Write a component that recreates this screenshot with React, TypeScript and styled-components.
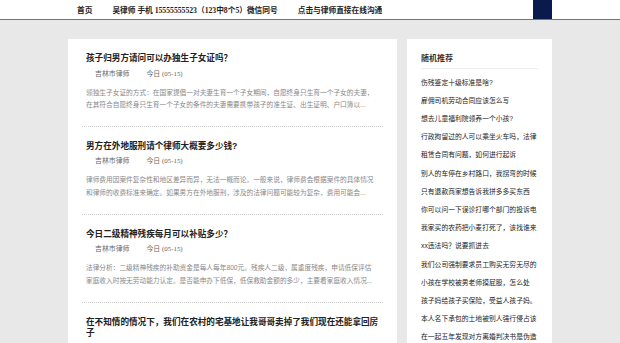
import React from "react";
import styled, { createGlobalStyle } from "styled-components";

const articles = [
  {
    id: 1,
    title: "孩子归男方请问可以办独生子女证吗？",
    date: "今日 (05-15)",
    summary:
      "领独生子女证的方式：在国家提倡一对夫妻生育一个子女期间，自愿终身只生育一个子女的夫妻，在其符合自愿终身只生育一个子女的条件的夫妻需要携带孩子的准生证、出生证明、户口簿以..."
  },
  {
    id: 2,
    title: "男方在外地服刑请个律师大概要多少钱?",
    date: "今日 (05-15)",
    summary:
      "律师费用因案件复杂性和地区差异而异，无法一概而论。一般来说，律师费会根据案件的具体情况和律师的收费标准来确定。如果男方在外地服刑，涉及的法律问题可能较为复杂，费用可能会..."
  },
  {
    id: 3,
    title: "今日二级精神残疾每月可以补贴多少？",
    date: "今日 (05-15)",
    summary:
      "法律分析：二级精神残疾的补助资金是每人每年800元。残疾人二级，属重度残疾，申请低保评估家庭收入时按无劳动能力认定。是否能申办下低保，低保救助金额的多少，主要看家庭收入情况..."
  },
  {
    id: 4,
    title: "在不知情的情况下，我们在农村的宅基地让我哥哥卖掉了我们现在还能拿回房子"
  }
];

const recommends = [
  "伤残鉴定十级标准是啥?",
  "雇佣司机劳动合同应该怎么写",
  "想去儿童福利院领养一个小孩?",
  "行政拘留过的人可以乘坐火车吗，法律",
  "租赁合同有问题，如何进行起诉",
  "别人的车停在乡村路口，我拐弯的时候",
  "只有退款商家想告诉我拼多多买东西",
  "你可以问一下误诊打哪个部门的投诉电",
  "我家买的农药把小麦打死了，该找谁来",
  "xx违法吗？说要抓进去",
  "我们公司强制要求员工购买无穷无尽的",
  "小孩在学校被男老师摸屁股，怎么处",
  "孩子妈给孩子买保险，受益人孩子妈。",
  "本人名下承包的土地被别人强行侵占该",
  "在一起五年发现对方离婚判决书是伪造"
];

const App = () => {
  return (
    <div>
      <GlobalStyle />
      <TopBar>
        <NavInner>
          <NavLink>首页</NavLink>
          <NavLink>吴律师 手机 15555555523（123中8个5）微信同号</NavLink>
          <NavLink>点击与律师直接在线沟通</NavLink>
          <NavBlock />
        </NavInner>
      </TopBar>
      <Main>
        <ListCard>
          {articles.map((a) => (
            <Article key={a.id}>
              <Title>{a.title}</Title>
              {a.date && (
                <Meta>
                  <MetaItem>吉林市律师</MetaItem>
                  <MetaItem>{a.date}</MetaItem>
                </Meta>
              )}
              {a.summary && <Summary>{a.summary}</Summary>}
            </Article>
          ))}
        </ListCard>
        <SideCard>
          <SideHeading>随机推荐</SideHeading>
          <SideList>
            {recommends.map((r, i) => (
              <SideItem key={i}>{r}</SideItem>
            ))}
          </SideList>
        </SideCard>
      </Main>
    </div>
  );
};

export default App;

const GlobalStyle = createGlobalStyle`
body {
  margin: 0;
  background: #e8e8e8;
  font-family: "Liberation Sans", "Noto Sans CJK SC", sans-serif;
}
`;

const TopBar = styled.div`
background: #fff;
height: 19px;
border-bottom: 1px solid #5577b0;
`;

const NavInner = styled.div`
width: 484px;
height: 100%;
margin: 0 auto;
padding-left: 9px;
box-sizing: border-box;
display: flex;
align-items: center;
gap: 20px;
`;

const NavLink = styled.a`
font-family: "Liberation Serif", "Noto Sans CJK SC", serif;
font-size: 7.7px;
font-weight: bold;
color: #222;
white-space: nowrap;
`;

const NavBlock = styled.div`
margin-left: auto;
width: 19px;
height: 19px;
background: #0b1a4c;
`;

const Main = styled.div`
width: 484px;
margin: 19px auto 0;
display: flex;
align-items: flex-start;
gap: 10px;
`;

const ListCard = styled.div`
width: 329px;
background: #fff;
padding: 0 14px;
box-sizing: border-box;
`;

const Article = styled.div`
padding: 14px 0 14px 4px;
border-bottom: 1px dotted #ccc;
&:last-child {
  border-bottom: none;
}
`;

const Title = styled.h2`
margin: 0;
font-size: 8.6px;
line-height: 11px;
font-weight: bold;
color: #222;
`;

const Meta = styled.div`
margin-top: 4.5px;
padding-left: 9px;
display: flex;
gap: 17px;
font-family: "Liberation Serif", "Noto Sans CJK SC", serif;
font-size: 6.9px;
line-height: 10px;
color: #666;
`;

const MetaItem = styled.span``;

const Summary = styled.p`
margin: 8px 0 0;
padding-right: 8px;
font-size: 6.7px;
line-height: 12.7px;
color: #888;
`;

const SideCard = styled.div`
width: 145px;
background: #fff;
padding: 13.5px 14px 0;
box-sizing: border-box;
`;

const SideHeading = styled.h3`
margin: 0;
padding-bottom: 4px;
border-bottom: 1px solid #eee;
font-size: 8px;
line-height: 11px;
font-weight: bold;
color: #333;
`;

const SideList = styled.ul`
list-style: none;
margin: 5px 0 0;
padding: 0;
`;

const SideItem = styled.li`
font-size: 6.8px;
line-height: 18.2px;
color: #222;
white-space: nowrap;
overflow: hidden;
`;
